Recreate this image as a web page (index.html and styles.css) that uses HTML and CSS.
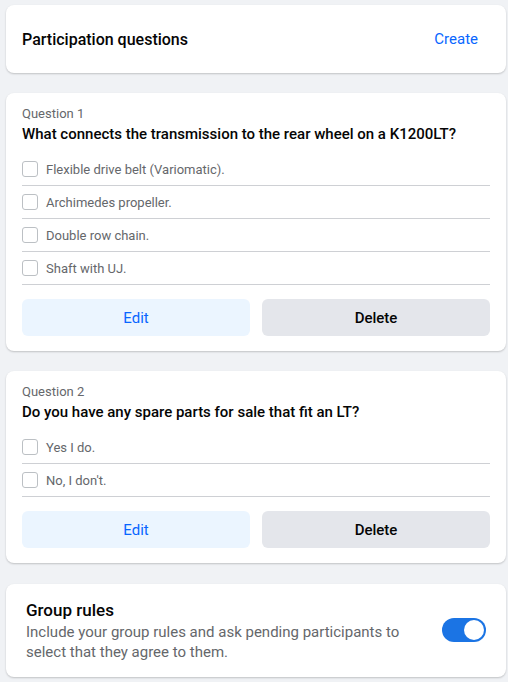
FILE: index.html
```html
<!DOCTYPE html>
<html lang="en">
<head>
  <meta charset="UTF-8">
  <meta name="viewport" content="width=device-width, initial-scale=1.0">
  <title>Participation questions</title>
  <link rel="stylesheet" href="styles.css">
</head>
<body>
  <div class="page">
    <!-- Header card -->
    <section class="card header-card">
      <h2>Participation questions</h2>
      <a class="create" href="#">Create</a>
    </section>

    <!-- Question 1 -->
    <section class="card question">
      <p class="q-label">Question 1</p>
      <h3>What connects the transmission to the rear wheel on a K1200LT?</h3>
      <ul class="options">
        <li><span class="box"></span>Flexible drive belt (Variomatic).</li>
        <li><span class="box"></span>Archimedes propeller.</li>
        <li><span class="box"></span>Double row chain.</li>
        <li><span class="box"></span>Shaft with UJ.</li>
      </ul>
      <div class="actions">
        <button class="btn edit">Edit</button>
        <button class="btn delete">Delete</button>
      </div>
    </section>

    <!-- Question 2 -->
    <section class="card question">
      <p class="q-label">Question 2</p>
      <h3>Do you have any spare parts for sale that fit an LT?</h3>
      <ul class="options">
        <li><span class="box"></span>Yes I do.</li>
        <li><span class="box"></span>No, I don't.</li>
      </ul>
      <div class="actions">
        <button class="btn edit">Edit</button>
        <button class="btn delete">Delete</button>
      </div>
    </section>

    <!-- Group rules -->
    <section class="card rules">
      <div class="rules-text">
        <h3>Group rules</h3>
        <p>Include your group rules and ask pending participants to select that they agree to them.</p>
      </div>
      <span class="toggle"><span class="knob"></span></span>
    </section>
  </div>
</body>
</html>
```

FILE: styles.css
```css
/* General styles */
body {
  margin: 0;
  background-color: #f0f2f5;
  font-family: Roboto, "Liberation Sans", sans-serif;
  color: #050505;
}

.page {
  display: flex;
  flex-direction: column;
  gap: 20px;
  padding: 5px 2px 5px 6px;
}

.card {
  background-color: white;
  border-radius: 8px;
  box-shadow: 0 1px 2px rgba(0, 0, 0, 0.2);
  padding: 0 16px;
}

/* Header card */
.header-card {
  height: 68px;
  display: flex;
  align-items: center;
  justify-content: space-between;
  padding-right: 28px;
}

.header-card h2 {
  margin: 0;
  font-size: 16px;
  font-weight: 500;
}

.create {
  color: #0866ff;
  text-decoration: none;
  font-size: 15px;
}

/* Question cards */
.question {
  padding-top: 12px;
  padding-bottom: 15px;
}

.q-label {
  margin: 0;
  font-size: 13px;
  color: #65676b;
  line-height: 18px;
}

.question h3 {
  margin: 0 0 8px;
  font-size: 15px;
  font-weight: 500;
  line-height: 22px;
}

.options {
  list-style: none;
  margin: 0;
  padding: 0;
}

.options li {
  height: 32px;
  display: flex;
  align-items: center;
  border-bottom: 1px solid #ced0d4;
  font-size: 13px;
  color: #65676b;
}

.box {
  width: 14px;
  height: 14px;
  border: 1px solid #bcc0c4;
  border-radius: 3px;
  margin-right: 8px;
}

.actions {
  display: flex;
  gap: 12px;
  margin-top: 14px;
}

.btn {
  flex: 1;
  height: 37px;
  border: none;
  border-radius: 6px;
  font-family: inherit;
  font-size: 15px;
}

.btn.edit {
  background-color: #ebf5ff;
  color: #0866ff;
}

.btn.delete {
  background-color: #e4e6eb;
  color: #050505;
  font-weight: 500;
}

/* Group rules */
.rules {
  display: flex;
  align-items: center;
  justify-content: space-between;
  margin-top: 1px;
  padding: 14px 20px 15px;
}

.rules h3 {
  margin: 0;
  font-size: 17px;
  font-weight: 500;
  line-height: 24px;
}

.rules p {
  margin: 0;
  width: 390px;
  font-size: 15px;
  color: #65676b;
  line-height: 20px;
}

.toggle {
  width: 44px;
  height: 24px;
  border-radius: 12px;
  background-color: #1b74e4;
  position: relative;
}

.knob {
  position: absolute;
  right: 2px;
  top: 2px;
  width: 20px;
  height: 20px;
  border-radius: 50%;
  background-color: white;
}
```
